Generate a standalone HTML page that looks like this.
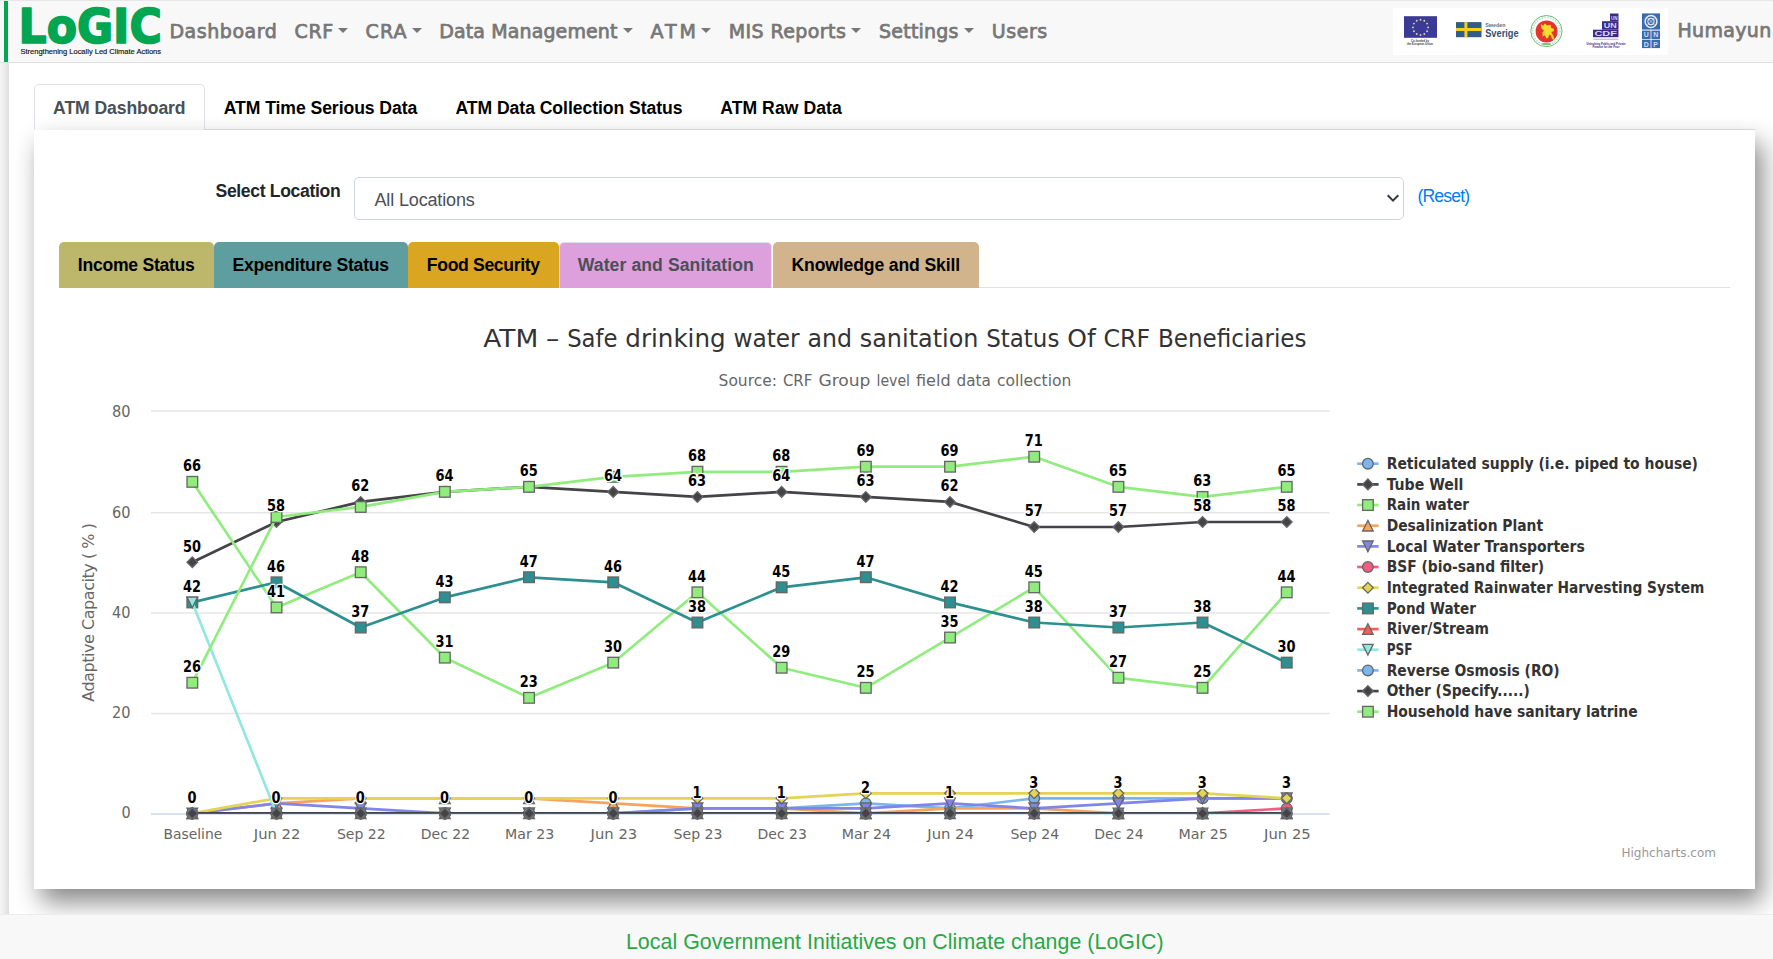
<!DOCTYPE html>
<html lang="en">
<head>
<meta charset="utf-8">
<title>LoGIC - ATM Dashboard</title>
<style>
*{box-sizing:border-box}
html,body{margin:0;padding:0}
body{width:1773px;height:959px;overflow:hidden;position:relative;background:#fff;font-family:'Liberation Sans', 'DejaVu Sans', sans-serif;color:#212529}
ul{list-style:none;margin:0;padding:0}
a{text-decoration:none;color:inherit}
.edge{position:absolute;left:0;top:63px;width:9px;height:852px;background:linear-gradient(90deg,#f5f5f5 0%,#ebebeb 50%,#dfdfdf 100%)}
.navbar{position:absolute;left:0;top:0;width:1773px;height:63px;background:#f8f8f8;border-top:1px solid #e7e7e7;border-bottom:1px solid #e0e0e0}
.navbar .bar{position:absolute;left:4px;top:0;width:4px;height:61px;background:#00a651}
.brand{position:absolute;left:0;top:0}
.navbar ul.menu li{position:absolute;top:18.2px;white-space:nowrap;font-family:'DejaVu Sans', 'Liberation Sans', sans-serif;font-weight:400;font-size:19px;line-height:24px;color:#777;-webkit-text-stroke:0.75px #777}
.dd:after{content:"";display:inline-block;margin-left:calc(5.2px - var(--ls, 0px));vertical-align:5.5px;border-top:5.2px solid #777;border-left:5px solid transparent;border-right:5px solid transparent;letter-spacing:0}
.logos{position:absolute;left:1393px;top:7px;width:275px;height:47px;background:#fff}
.user{position:absolute;left:1677.5px;top:17.2px;font-family:'DejaVu Sans', 'Liberation Sans', sans-serif;font-weight:400;font-size:19px;line-height:24px;color:#777;-webkit-text-stroke:0.75px #777;letter-spacing:0.32px;white-space:nowrap}
.tabs{position:absolute;left:34px;top:84.2px;width:1721px;height:46px;border-bottom:1.3px solid #dee2e6}
.tabs li{position:absolute;top:0;height:46px;text-align:center;font-weight:700;font-size:17.6px;line-height:49.2px;color:#000;white-space:nowrap}
.tabs li.act{line-height:47.5px;color:#495057;background:#fff;border:1.3px solid #dee2e6;border-bottom-color:#fff;border-radius:5px 5px 0 0}
.card{position:absolute;left:34px;top:129.7px;width:1721px;height:758.9px;background:#fff;box-shadow:6.67px 13.33px 24px #888}
.lbl{position:absolute;left:181.5px;top:50.6px;font-weight:700;font-size:17.6px;line-height:22px;color:#212529;letter-spacing:-0.35px;white-space:nowrap}
.sel{position:absolute;left:320px;top:47.1px;width:1050px;height:43px;border:1.3px solid #ced4da;border-radius:5px;background:#fff;color:#495057;font-size:17.6px;line-height:40px;padding:2.6px 0 0 19.5px;font-size:18px;letter-spacing:-0.15px}
.sel svg{position:absolute;right:3.3px;top:13.2px}
.reset{position:absolute;left:1383.5px;top:55px;color:#007bff;font-size:17.6px;line-height:22px;letter-spacing:-0.86px;white-space:nowrap}
.sub{position:absolute;left:25px;top:112px;width:1671px;height:46.5px;border-bottom:1.3px solid #dee2e6}
.sub li{position:absolute;top:0;height:46px;text-align:center;font-weight:700;font-size:17.6px;line-height:46px;color:#000;white-space:nowrap;border-radius:5px 5px 0 0}
.sub li.act{color:#495057;border:1.3px solid #dee2e6;border-bottom:0;line-height:44.6px}
svg.hc{position:absolute;left:25px;top:170.3px}
.footer{position:absolute;left:0;top:913.6px;width:1773px;height:46px;background:#f8f8f8;border-top:1px solid #ececec;text-align:center;color:#28a745;font-size:21.33px;line-height:26px;padding:14.4px 0 0 16.5px;letter-spacing:0.055px}
</style>
</head>
<body>
<div class="edge"></div>
<nav class="navbar">
  <div class="bar"></div>
  <a class="brand">
    <svg width="170" height="62" viewBox="0 0 170 62">
      <text x="18.6" y="41.9" font-family="'DejaVu Sans', 'Liberation Sans', sans-serif" font-weight="700" font-size="47.5" fill="#00a651" stroke="#00a651" stroke-width="1.7" stroke-linejoin="round" textLength="143.2" lengthAdjust="spacingAndGlyphs">LoGIC</text>
      <text x="20.5" y="52.9" font-family="'Liberation Sans', 'DejaVu Sans', sans-serif" font-size="7.6" fill="#111" stroke="#111" stroke-width="0.15" textLength="140.5" lengthAdjust="spacingAndGlyphs">Strengthening Locally Led Climate Actions</text>
    </svg>
  </a>
  <ul class="menu"><li style="left:169.4px;letter-spacing:0.55px;--ls:0.55px"><a>Dashboard</a></li><li style="left:294.6px;letter-spacing:0.55px;--ls:0.55px"><a class="dd">CRF</a></li><li style="left:365.6px;letter-spacing:1.05px;--ls:1.05px"><a class="dd">CRA</a></li><li style="left:439.2px;letter-spacing:0.12px;--ls:0.12px"><a class="dd">Data Management</a></li><li style="left:650.6px;letter-spacing:2.83px;--ls:2.83px"><a class="dd">ATM</a></li><li style="left:728.8px;letter-spacing:0.40px;--ls:0.40px"><a class="dd">MIS Reports</a></li><li style="left:879.1px;letter-spacing:0.21px;--ls:0.21px"><a class="dd">Settings</a></li><li style="left:991.8px;letter-spacing:0.54px;--ls:0.54px"><a>Users</a></li></ul>
  <div class="logos"><svg width="275" height="47" viewBox="0 0 275 47"><rect x="11.0" y="8.2" width="33" height="21.6" fill="#3b3b96"/><circle cx="27.50" cy="11.80" r="0.95" fill="#d9d6a6"/><circle cx="31.30" cy="12.82" r="0.95" fill="#d9d6a6"/><circle cx="34.08" cy="15.60" r="0.95" fill="#d9d6a6"/><circle cx="35.10" cy="19.40" r="0.95" fill="#d9d6a6"/><circle cx="34.08" cy="23.20" r="0.95" fill="#d9d6a6"/><circle cx="31.30" cy="25.98" r="0.95" fill="#d9d6a6"/><circle cx="27.50" cy="27.00" r="0.95" fill="#d9d6a6"/><circle cx="23.70" cy="25.98" r="0.95" fill="#d9d6a6"/><circle cx="20.92" cy="23.20" r="0.95" fill="#d9d6a6"/><circle cx="19.90" cy="19.40" r="0.95" fill="#d9d6a6"/><circle cx="20.92" cy="15.60" r="0.95" fill="#d9d6a6"/><circle cx="23.70" cy="12.82" r="0.95" fill="#d9d6a6"/><text x="27.0" y="33.5" text-anchor="middle" font-family="'Liberation Sans', 'DejaVu Sans', sans-serif" font-weight="700" font-size="3.2" fill="#444" textLength="18" lengthAdjust="spacingAndGlyphs">Co-funded by</text><text x="27.0" y="36.5" text-anchor="middle" font-family="'Liberation Sans', 'DejaVu Sans', sans-serif" font-weight="700" font-size="3.2" fill="#444" textLength="26" lengthAdjust="spacingAndGlyphs">the European Union</text><rect x="63.0" y="14.1" width="25.5" height="15.1" fill="#2f5d8c"/><rect x="71.4" y="14.1" width="3" height="15.1" fill="#f3cf24"/><rect x="63.0" y="20.0" width="25.5" height="3" fill="#f3cf24"/><text x="92.2" y="18.8" font-family="'Liberation Sans', 'DejaVu Sans', sans-serif" font-weight="700" font-size="6" fill="#5f7186" textLength="20.3" lengthAdjust="spacingAndGlyphs">Sweden</text><text x="92.2" y="29.0" font-family="'Liberation Sans', 'DejaVu Sans', sans-serif" font-weight="700" font-size="10.2" fill="#34506d" textLength="33.4" lengthAdjust="spacingAndGlyphs">Sverige</text><circle cx="153.4" cy="23.1" r="15.6" fill="#fff" stroke="#58b36a" stroke-width="0.9"/><circle cx="153.4" cy="23.1" r="13.6" fill="none" stroke="#bfe3c6" stroke-width="1.6" stroke-dasharray="1.6 1.2"/><circle cx="153.6" cy="23.4" r="11" fill="#e5352b"/><polygon points="147.8,16.1 150.4,17.8 151.7,15.5 154.3,17.4 157.5,16.8 158.2,20.0 160.8,20.7 160.8,23.3 158.2,23.9 160.1,27.2 161.4,31.8 159.1,31.1 157.8,27.5 156.2,26.5 155.2,29.8 153.3,30.4 152.0,27.2 149.7,28.5 149.4,24.6 151.0,22.6 148.4,20.4" fill="#f7dc2e"/><rect x="149.4" y="35.1" width="8" height="1.8" fill="#6fbf7c"/><rect x="217.0" y="5.5" width="8.5" height="7.7" fill="#3b2b86"/><rect x="209.0" y="13.2" width="16.5" height="8.5" fill="#3b2b86"/><rect x="200.0" y="21.7" width="25.5" height="7.5" fill="#3b2b86"/><text x="221.2" y="11.7" text-anchor="middle" font-family="'Liberation Sans', 'DejaVu Sans', sans-serif" font-weight="700" font-size="4.5" fill="#d9d4f0">UN</text><text x="217.2" y="20.0" text-anchor="middle" font-family="'Liberation Sans', 'DejaVu Sans', sans-serif" font-weight="700" font-size="7" fill="#d9d4f0" textLength="13" lengthAdjust="spacingAndGlyphs">UN</text><text x="212.7" y="27.9" text-anchor="middle" font-family="'Liberation Sans', 'DejaVu Sans', sans-serif" font-weight="700" font-size="6.4" fill="#d9d4f0" textLength="22.5" lengthAdjust="spacingAndGlyphs">CDF</text><rect x="200.5" y="30.8" width="25" height="0.7" fill="#8c82c0"/><text x="213.0" y="36.6" text-anchor="middle" font-family="'Liberation Sans', 'DejaVu Sans', sans-serif" font-weight="700" font-size="3" fill="#3b2b86" textLength="39" lengthAdjust="spacingAndGlyphs">Unlocking Public and Private</text><text x="213.0" y="39.8" text-anchor="middle" font-family="'Liberation Sans', 'DejaVu Sans', sans-serif" font-weight="700" font-size="3" fill="#3b2b86" textLength="27" lengthAdjust="spacingAndGlyphs">Finance for the Poor</text><rect x="249.0" y="5.4" width="18" height="16.2" fill="#3c6ab1"/><circle cx="258.0" cy="13.5" r="5.9" fill="none" stroke="#e8eef8" stroke-width="1.5"/><circle cx="258.0" cy="13.5" r="3.1" fill="none" stroke="#dfe7f5" stroke-width="1.1"/><path d="M254.4 17.1 L261.6 9.9 M254.4 9.9 L261.6 17.1" stroke="#dfe7f5" stroke-width="0.7"/><rect x="249.0" y="22.6" width="8.6" height="8.4" fill="#3c6ab1"/><text x="253.3" y="29.4" text-anchor="middle" font-family="'Liberation Sans', 'DejaVu Sans', sans-serif" font-weight="700" font-size="7" fill="#cfdcf1">U</text><rect x="258.4" y="22.6" width="8.6" height="8.4" fill="#3c6ab1"/><text x="262.7" y="29.4" text-anchor="middle" font-family="'Liberation Sans', 'DejaVu Sans', sans-serif" font-weight="700" font-size="7" fill="#cfdcf1">N</text><rect x="249.0" y="31.7" width="8.6" height="8.4" fill="#3c6ab1"/><text x="253.3" y="38.5" text-anchor="middle" font-family="'Liberation Sans', 'DejaVu Sans', sans-serif" font-weight="700" font-size="7" fill="#cfdcf1">D</text><rect x="258.4" y="31.7" width="8.6" height="8.4" fill="#3c6ab1"/><text x="262.7" y="38.5" text-anchor="middle" font-family="'Liberation Sans', 'DejaVu Sans', sans-serif" font-weight="700" font-size="7" fill="#cfdcf1">P</text></svg></div>
  <div class="user">Humayun</div>
</nav>
<ul class="tabs"><li class="act" style="left:-0.2px;width:171.0px;letter-spacing:-0.09px"><a>ATM Dashboard</a></li><li class="" style="left:170.5px;width:232.0px;letter-spacing:-0.07px"><a>ATM Time Serious Data</a></li><li class="" style="left:402.5px;width:265.0px;letter-spacing:-0.05px"><a>ATM Data Collection Status</a></li><li class="" style="left:667.5px;width:159.0px;letter-spacing:0.06px"><a>ATM Raw Data</a></li></ul>
<main class="card">
  <label class="lbl">Select Location</label>
  <div class="sel">All Locations<svg width="14" height="14" viewBox="0 0 14 14"><path d="M1.7 4.3 L7 9.6 L12.3 4.3" fill="none" stroke="#343a40" stroke-width="2"/></svg></div>
  <a class="reset">(Reset)</a>
  <ul class="sub"><li class="" style="left:-0.2px;width:154.8px;background:#bdb76b;letter-spacing:-0.27px"><a>Income Status</a></li><li class="" style="left:154.6px;width:194.2px;background:#5f9ea0;letter-spacing:-0.22px"><a>Expenditure Status</a></li><li class="" style="left:348.8px;width:151.0px;background:#daa520;letter-spacing:-0.34px"><a>Food Security</a></li><li class="act" style="left:500.3px;width:213.0px;background:#dda0dd;letter-spacing:0.09px"><a>Water and Sanitation</a></li><li class="" style="left:713.5px;width:206.5px;background:#d2b48c;letter-spacing:-0.14px"><a>Knowledge and Skill</a></li></ul>
  <svg class="hc" width="1670" height="580" viewBox="59 300 1670 580">
<text y="346.7" font-family="'DejaVu Sans', 'Liberation Sans', sans-serif" font-size="24" fill="#333"><tspan x="483.2" textLength="55.1" lengthAdjust="spacingAndGlyphs">ATM</tspan><tspan> </tspan><tspan x="546.1" textLength="13.3" lengthAdjust="spacingAndGlyphs">–</tspan><tspan> </tspan><tspan x="567.2" textLength="50.3" lengthAdjust="spacingAndGlyphs">Safe</tspan><tspan> </tspan><tspan x="625.3" textLength="100.3" lengthAdjust="spacingAndGlyphs">drinking</tspan><tspan> </tspan><tspan x="733.4" textLength="66.3" lengthAdjust="spacingAndGlyphs">water</tspan><tspan> </tspan><tspan x="807.5" textLength="44.5" lengthAdjust="spacingAndGlyphs">and</tspan><tspan> </tspan><tspan x="859.8" textLength="118.6" lengthAdjust="spacingAndGlyphs">sanitation</tspan><tspan> </tspan><tspan x="986.2" textLength="73.2" lengthAdjust="spacingAndGlyphs">Status</tspan><tspan> </tspan><tspan x="1067.2" textLength="28.5" lengthAdjust="spacingAndGlyphs">Of</tspan><tspan> </tspan><tspan x="1103.5" textLength="46.7" lengthAdjust="spacingAndGlyphs">CRF</tspan><tspan> </tspan><tspan x="1158.0" textLength="148.5" lengthAdjust="spacingAndGlyphs">Beneficiaries</tspan></text>
<text y="386.1" font-family="'DejaVu Sans', 'Liberation Sans', sans-serif" font-size="16" fill="#666"><tspan x="718.6" textLength="58.3" lengthAdjust="spacingAndGlyphs">Source:</tspan><tspan> </tspan><tspan x="782.9" textLength="29.5" lengthAdjust="spacingAndGlyphs">CRF</tspan><tspan> </tspan><tspan x="818.4" textLength="52.1" lengthAdjust="spacingAndGlyphs">Group</tspan><tspan> </tspan><tspan x="876.5" textLength="33.5" lengthAdjust="spacingAndGlyphs">level</tspan><tspan> </tspan><tspan x="916.0" textLength="34.6" lengthAdjust="spacingAndGlyphs">field</tspan><tspan> </tspan><tspan x="956.6" textLength="34.3" lengthAdjust="spacingAndGlyphs">data</tspan><tspan> </tspan><tspan x="996.9" textLength="74.4" lengthAdjust="spacingAndGlyphs">collection</tspan></text>
<line x1="151.0" x2="1329.5" y1="713.40" y2="713.40" stroke="#e6e6e6" stroke-width="1.5"/>
<line x1="151.0" x2="1329.5" y1="613.00" y2="613.00" stroke="#e6e6e6" stroke-width="1.5"/>
<line x1="151.0" x2="1329.5" y1="512.65" y2="512.65" stroke="#e6e6e6" stroke-width="1.5"/>
<line x1="151.0" x2="1329.5" y1="411.00" y2="411.00" stroke="#e6e6e6" stroke-width="1.5"/>
<line x1="151.0" x2="1329.5" y1="813.9" y2="813.9" stroke="#ccd6eb" stroke-width="1.5"/>
<text x="130.6" y="818.10" text-anchor="end" font-family="'DejaVu Sans', 'Liberation Sans', sans-serif" font-size="15" fill="#666" textLength="9.2" lengthAdjust="spacingAndGlyphs">0</text>
<text x="130.6" y="718.00" text-anchor="end" font-family="'DejaVu Sans', 'Liberation Sans', sans-serif" font-size="15" fill="#666" textLength="18.5" lengthAdjust="spacingAndGlyphs">20</text>
<text x="130.6" y="618.05" text-anchor="end" font-family="'DejaVu Sans', 'Liberation Sans', sans-serif" font-size="15" fill="#666" textLength="18.5" lengthAdjust="spacingAndGlyphs">40</text>
<text x="130.6" y="518.05" text-anchor="end" font-family="'DejaVu Sans', 'Liberation Sans', sans-serif" font-size="15" fill="#666" textLength="18.5" lengthAdjust="spacingAndGlyphs">60</text>
<text x="130.6" y="417.15" text-anchor="end" font-family="'DejaVu Sans', 'Liberation Sans', sans-serif" font-size="15" fill="#666" textLength="18.5" lengthAdjust="spacingAndGlyphs">80</text>
<text transform="translate(94.4,612.4) rotate(-90)" text-anchor="middle" font-family="'DejaVu Sans', 'Liberation Sans', sans-serif" font-size="16" fill="#666" textLength="178.8" lengthAdjust="spacing">Adaptive Capacity ( % )</text>
<text x="192.9" y="839" text-anchor="middle" font-family="'DejaVu Sans', 'Liberation Sans', sans-serif" font-size="14.67" fill="#666" textLength="58.7" lengthAdjust="spacingAndGlyphs">Baseline</text>
<text x="277.1" y="839" text-anchor="middle" font-family="'DejaVu Sans', 'Liberation Sans', sans-serif" font-size="14.67" fill="#666" textLength="46.6" lengthAdjust="spacingAndGlyphs">Jun 22</text>
<text x="361.3" y="839" text-anchor="middle" font-family="'DejaVu Sans', 'Liberation Sans', sans-serif" font-size="14.67" fill="#666" textLength="48.8" lengthAdjust="spacingAndGlyphs">Sep 22</text>
<text x="445.5" y="839" text-anchor="middle" font-family="'DejaVu Sans', 'Liberation Sans', sans-serif" font-size="14.67" fill="#666" textLength="49.3" lengthAdjust="spacingAndGlyphs">Dec 22</text>
<text x="529.7" y="839" text-anchor="middle" font-family="'DejaVu Sans', 'Liberation Sans', sans-serif" font-size="14.67" fill="#666" textLength="49.4" lengthAdjust="spacingAndGlyphs">Mar 23</text>
<text x="613.9" y="839" text-anchor="middle" font-family="'DejaVu Sans', 'Liberation Sans', sans-serif" font-size="14.67" fill="#666" textLength="46.6" lengthAdjust="spacingAndGlyphs">Jun 23</text>
<text x="698.0" y="839" text-anchor="middle" font-family="'DejaVu Sans', 'Liberation Sans', sans-serif" font-size="14.67" fill="#666" textLength="48.8" lengthAdjust="spacingAndGlyphs">Sep 23</text>
<text x="782.2" y="839" text-anchor="middle" font-family="'DejaVu Sans', 'Liberation Sans', sans-serif" font-size="14.67" fill="#666" textLength="49.3" lengthAdjust="spacingAndGlyphs">Dec 23</text>
<text x="866.4" y="839" text-anchor="middle" font-family="'DejaVu Sans', 'Liberation Sans', sans-serif" font-size="14.67" fill="#666" textLength="49.4" lengthAdjust="spacingAndGlyphs">Mar 24</text>
<text x="950.6" y="839" text-anchor="middle" font-family="'DejaVu Sans', 'Liberation Sans', sans-serif" font-size="14.67" fill="#666" textLength="46.6" lengthAdjust="spacingAndGlyphs">Jun 24</text>
<text x="1034.8" y="839" text-anchor="middle" font-family="'DejaVu Sans', 'Liberation Sans', sans-serif" font-size="14.67" fill="#666" textLength="48.8" lengthAdjust="spacingAndGlyphs">Sep 24</text>
<text x="1119.0" y="839" text-anchor="middle" font-family="'DejaVu Sans', 'Liberation Sans', sans-serif" font-size="14.67" fill="#666" textLength="49.3" lengthAdjust="spacingAndGlyphs">Dec 24</text>
<text x="1203.2" y="839" text-anchor="middle" font-family="'DejaVu Sans', 'Liberation Sans', sans-serif" font-size="14.67" fill="#666" textLength="49.4" lengthAdjust="spacingAndGlyphs">Mar 25</text>
<text x="1287.4" y="839" text-anchor="middle" font-family="'DejaVu Sans', 'Liberation Sans', sans-serif" font-size="14.67" fill="#666" textLength="46.6" lengthAdjust="spacingAndGlyphs">Jun 25</text>
<defs><clipPath id="plotclip"><rect x="150.0" y="405" width="1180.5" height="408.70000000000005"/></clipPath></defs>
<g><path d="M192.3 813.4 L276.5 813.4 L360.7 813.4 L444.9 813.4 L529.1 813.4 L613.2 813.4 L697.4 808.4 L781.6 808.4 L865.8 803.4 L950.0 808.4 L1034.2 798.3 L1118.4 798.3 L1202.6 798.3 L1286.8 798.3" fill="none" stroke="#7cb5ec" stroke-width="2.67" stroke-linejoin="round" stroke-linecap="round" clip-path="url(#plotclip)"/>
<circle cx="192.3" cy="813.4" r="5.33" fill="#7cb5ec" stroke="#666" stroke-width="1.33"/><circle cx="276.5" cy="813.4" r="5.33" fill="#7cb5ec" stroke="#666" stroke-width="1.33"/><circle cx="360.7" cy="813.4" r="5.33" fill="#7cb5ec" stroke="#666" stroke-width="1.33"/><circle cx="444.9" cy="813.4" r="5.33" fill="#7cb5ec" stroke="#666" stroke-width="1.33"/><circle cx="529.1" cy="813.4" r="5.33" fill="#7cb5ec" stroke="#666" stroke-width="1.33"/><circle cx="613.2" cy="813.4" r="5.33" fill="#7cb5ec" stroke="#666" stroke-width="1.33"/><circle cx="697.4" cy="808.4" r="5.33" fill="#7cb5ec" stroke="#666" stroke-width="1.33"/><circle cx="781.6" cy="808.4" r="5.33" fill="#7cb5ec" stroke="#666" stroke-width="1.33"/><circle cx="865.8" cy="803.4" r="5.33" fill="#7cb5ec" stroke="#666" stroke-width="1.33"/><circle cx="950.0" cy="808.4" r="5.33" fill="#7cb5ec" stroke="#666" stroke-width="1.33"/><circle cx="1034.2" cy="798.3" r="5.33" fill="#7cb5ec" stroke="#666" stroke-width="1.33"/><circle cx="1118.4" cy="798.3" r="5.33" fill="#7cb5ec" stroke="#666" stroke-width="1.33"/><circle cx="1202.6" cy="798.3" r="5.33" fill="#7cb5ec" stroke="#666" stroke-width="1.33"/><circle cx="1286.8" cy="798.3" r="5.33" fill="#7cb5ec" stroke="#666" stroke-width="1.33"/></g>
<g><path d="M192.3 562.2 L276.5 522.0 L360.7 501.9 L444.9 491.9 L529.1 486.8 L613.2 491.9 L697.4 496.9 L781.6 491.9 L865.8 496.9 L950.0 501.9 L1034.2 527.0 L1118.4 527.0 L1202.6 522.0 L1286.8 522.0" fill="none" stroke="#434348" stroke-width="2.67" stroke-linejoin="round" stroke-linecap="round" clip-path="url(#plotclip)"/>
<polygon points="192.3,556.9 197.6,562.2 192.3,567.5 187.0,562.2" fill="#434348" stroke="#666" stroke-width="1.33"/><polygon points="276.5,516.7 281.8,522.0 276.5,527.3 271.2,522.0" fill="#434348" stroke="#666" stroke-width="1.33"/><polygon points="360.7,496.6 366.0,501.9 360.7,507.2 355.4,501.9" fill="#434348" stroke="#666" stroke-width="1.33"/><polygon points="444.9,486.5 450.2,491.9 444.9,497.2 439.5,491.9" fill="#434348" stroke="#666" stroke-width="1.33"/><polygon points="529.1,481.5 534.4,486.8 529.1,492.2 523.7,486.8" fill="#434348" stroke="#666" stroke-width="1.33"/><polygon points="613.2,486.5 618.6,491.9 613.2,497.2 607.9,491.9" fill="#434348" stroke="#666" stroke-width="1.33"/><polygon points="697.4,491.6 702.8,496.9 697.4,502.2 692.1,496.9" fill="#434348" stroke="#666" stroke-width="1.33"/><polygon points="781.6,486.5 787.0,491.9 781.6,497.2 776.3,491.9" fill="#434348" stroke="#666" stroke-width="1.33"/><polygon points="865.8,491.6 871.1,496.9 865.8,502.2 860.5,496.9" fill="#434348" stroke="#666" stroke-width="1.33"/><polygon points="950.0,496.6 955.3,501.9 950.0,507.2 944.7,501.9" fill="#434348" stroke="#666" stroke-width="1.33"/><polygon points="1034.2,521.7 1039.5,527.0 1034.2,532.4 1028.9,527.0" fill="#434348" stroke="#666" stroke-width="1.33"/><polygon points="1118.4,521.7 1123.7,527.0 1118.4,532.4 1113.1,527.0" fill="#434348" stroke="#666" stroke-width="1.33"/><polygon points="1202.6,516.7 1207.9,522.0 1202.6,527.3 1197.2,522.0" fill="#434348" stroke="#666" stroke-width="1.33"/><polygon points="1286.8,516.7 1292.1,522.0 1286.8,527.3 1281.4,522.0" fill="#434348" stroke="#666" stroke-width="1.33"/></g>
<g><path d="M192.3 481.8 L276.5 607.4 L360.7 572.2 L444.9 657.7 L529.1 697.8 L613.2 662.7 L697.4 592.3 L781.6 667.7 L865.8 687.8 L950.0 637.6 L1034.2 587.3 L1118.4 677.8 L1202.6 687.8 L1286.8 592.3" fill="none" stroke="#90ed7d" stroke-width="2.67" stroke-linejoin="round" stroke-linecap="round" clip-path="url(#plotclip)"/>
<rect x="187.0" y="476.5" width="10.66" height="10.66" fill="#90ed7d" stroke="#666" stroke-width="1.33"/><rect x="271.2" y="602.1" width="10.66" height="10.66" fill="#90ed7d" stroke="#666" stroke-width="1.33"/><rect x="355.4" y="566.9" width="10.66" height="10.66" fill="#90ed7d" stroke="#666" stroke-width="1.33"/><rect x="439.5" y="652.3" width="10.66" height="10.66" fill="#90ed7d" stroke="#666" stroke-width="1.33"/><rect x="523.7" y="692.5" width="10.66" height="10.66" fill="#90ed7d" stroke="#666" stroke-width="1.33"/><rect x="607.9" y="657.3" width="10.66" height="10.66" fill="#90ed7d" stroke="#666" stroke-width="1.33"/><rect x="692.1" y="587.0" width="10.66" height="10.66" fill="#90ed7d" stroke="#666" stroke-width="1.33"/><rect x="776.3" y="662.4" width="10.66" height="10.66" fill="#90ed7d" stroke="#666" stroke-width="1.33"/><rect x="860.5" y="682.5" width="10.66" height="10.66" fill="#90ed7d" stroke="#666" stroke-width="1.33"/><rect x="944.7" y="632.2" width="10.66" height="10.66" fill="#90ed7d" stroke="#666" stroke-width="1.33"/><rect x="1028.9" y="582.0" width="10.66" height="10.66" fill="#90ed7d" stroke="#666" stroke-width="1.33"/><rect x="1113.1" y="672.4" width="10.66" height="10.66" fill="#90ed7d" stroke="#666" stroke-width="1.33"/><rect x="1197.2" y="682.5" width="10.66" height="10.66" fill="#90ed7d" stroke="#666" stroke-width="1.33"/><rect x="1281.4" y="587.0" width="10.66" height="10.66" fill="#90ed7d" stroke="#666" stroke-width="1.33"/></g>
<g><path d="M192.3 813.4 L276.5 803.4 L360.7 798.3 L444.9 798.3 L529.1 798.3 L613.2 803.4 L697.4 808.4 L781.6 808.4 L865.8 813.4 L950.0 808.4 L1034.2 808.4 L1118.4 813.4 L1202.6 813.4 L1286.8 813.4" fill="none" stroke="#f7a35c" stroke-width="2.67" stroke-linejoin="round" stroke-linecap="round" clip-path="url(#plotclip)"/>
<polygon points="192.3,808.1 197.6,818.7 187.0,818.7" fill="#f7a35c" stroke="#666" stroke-width="1.33"/><polygon points="276.5,798.0 281.8,808.7 271.2,808.7" fill="#f7a35c" stroke="#666" stroke-width="1.33"/><polygon points="360.7,793.0 366.0,803.7 355.4,803.7" fill="#f7a35c" stroke="#666" stroke-width="1.33"/><polygon points="444.9,793.0 450.2,803.7 439.5,803.7" fill="#f7a35c" stroke="#666" stroke-width="1.33"/><polygon points="529.1,793.0 534.4,803.7 523.7,803.7" fill="#f7a35c" stroke="#666" stroke-width="1.33"/><polygon points="613.2,798.0 618.6,808.7 607.9,808.7" fill="#f7a35c" stroke="#666" stroke-width="1.33"/><polygon points="697.4,803.0 702.8,813.7 692.1,813.7" fill="#f7a35c" stroke="#666" stroke-width="1.33"/><polygon points="781.6,803.0 787.0,813.7 776.3,813.7" fill="#f7a35c" stroke="#666" stroke-width="1.33"/><polygon points="865.8,808.1 871.1,818.7 860.5,818.7" fill="#f7a35c" stroke="#666" stroke-width="1.33"/><polygon points="950.0,803.0 955.3,813.7 944.7,813.7" fill="#f7a35c" stroke="#666" stroke-width="1.33"/><polygon points="1034.2,803.0 1039.5,813.7 1028.9,813.7" fill="#f7a35c" stroke="#666" stroke-width="1.33"/><polygon points="1118.4,808.1 1123.7,818.7 1113.1,818.7" fill="#f7a35c" stroke="#666" stroke-width="1.33"/><polygon points="1202.6,808.1 1207.9,818.7 1197.2,818.7" fill="#f7a35c" stroke="#666" stroke-width="1.33"/><polygon points="1286.8,808.1 1292.1,818.7 1281.4,818.7" fill="#f7a35c" stroke="#666" stroke-width="1.33"/></g>
<g><path d="M192.3 813.4 L276.5 803.4 L360.7 808.4 L444.9 813.4 L529.1 813.4 L613.2 813.4 L697.4 808.4 L781.6 808.4 L865.8 808.4 L950.0 803.4 L1034.2 808.4 L1118.4 803.4 L1202.6 798.3 L1286.8 798.3" fill="none" stroke="#8085e9" stroke-width="2.67" stroke-linejoin="round" stroke-linecap="round" clip-path="url(#plotclip)"/>
<polygon points="187.0,808.1 197.6,808.1 192.3,818.7" fill="#8085e9" stroke="#666" stroke-width="1.33"/><polygon points="271.2,798.0 281.8,798.0 276.5,808.7" fill="#8085e9" stroke="#666" stroke-width="1.33"/><polygon points="355.4,803.0 366.0,803.0 360.7,813.7" fill="#8085e9" stroke="#666" stroke-width="1.33"/><polygon points="439.5,808.1 450.2,808.1 444.9,818.7" fill="#8085e9" stroke="#666" stroke-width="1.33"/><polygon points="523.7,808.1 534.4,808.1 529.1,818.7" fill="#8085e9" stroke="#666" stroke-width="1.33"/><polygon points="607.9,808.1 618.6,808.1 613.2,818.7" fill="#8085e9" stroke="#666" stroke-width="1.33"/><polygon points="692.1,803.0 702.8,803.0 697.4,813.7" fill="#8085e9" stroke="#666" stroke-width="1.33"/><polygon points="776.3,803.0 787.0,803.0 781.6,813.7" fill="#8085e9" stroke="#666" stroke-width="1.33"/><polygon points="860.5,803.0 871.1,803.0 865.8,813.7" fill="#8085e9" stroke="#666" stroke-width="1.33"/><polygon points="944.7,798.0 955.3,798.0 950.0,808.7" fill="#8085e9" stroke="#666" stroke-width="1.33"/><polygon points="1028.9,803.0 1039.5,803.0 1034.2,813.7" fill="#8085e9" stroke="#666" stroke-width="1.33"/><polygon points="1113.1,798.0 1123.7,798.0 1118.4,808.7" fill="#8085e9" stroke="#666" stroke-width="1.33"/><polygon points="1197.2,793.0 1207.9,793.0 1202.6,803.7" fill="#8085e9" stroke="#666" stroke-width="1.33"/><polygon points="1281.4,793.0 1292.1,793.0 1286.8,803.7" fill="#8085e9" stroke="#666" stroke-width="1.33"/></g>
<g><path d="M192.3 813.4 L276.5 813.4 L360.7 813.4 L444.9 813.4 L529.1 813.4 L613.2 813.4 L697.4 813.4 L781.6 813.4 L865.8 813.4 L950.0 813.4 L1034.2 813.4 L1118.4 813.4 L1202.6 813.4 L1286.8 808.4" fill="none" stroke="#f15c80" stroke-width="2.67" stroke-linejoin="round" stroke-linecap="round" clip-path="url(#plotclip)"/>
<circle cx="192.3" cy="813.4" r="5.33" fill="#f15c80" stroke="#666" stroke-width="1.33"/><circle cx="276.5" cy="813.4" r="5.33" fill="#f15c80" stroke="#666" stroke-width="1.33"/><circle cx="360.7" cy="813.4" r="5.33" fill="#f15c80" stroke="#666" stroke-width="1.33"/><circle cx="444.9" cy="813.4" r="5.33" fill="#f15c80" stroke="#666" stroke-width="1.33"/><circle cx="529.1" cy="813.4" r="5.33" fill="#f15c80" stroke="#666" stroke-width="1.33"/><circle cx="613.2" cy="813.4" r="5.33" fill="#f15c80" stroke="#666" stroke-width="1.33"/><circle cx="697.4" cy="813.4" r="5.33" fill="#f15c80" stroke="#666" stroke-width="1.33"/><circle cx="781.6" cy="813.4" r="5.33" fill="#f15c80" stroke="#666" stroke-width="1.33"/><circle cx="865.8" cy="813.4" r="5.33" fill="#f15c80" stroke="#666" stroke-width="1.33"/><circle cx="950.0" cy="813.4" r="5.33" fill="#f15c80" stroke="#666" stroke-width="1.33"/><circle cx="1034.2" cy="813.4" r="5.33" fill="#f15c80" stroke="#666" stroke-width="1.33"/><circle cx="1118.4" cy="813.4" r="5.33" fill="#f15c80" stroke="#666" stroke-width="1.33"/><circle cx="1202.6" cy="813.4" r="5.33" fill="#f15c80" stroke="#666" stroke-width="1.33"/><circle cx="1286.8" cy="808.4" r="5.33" fill="#f15c80" stroke="#666" stroke-width="1.33"/></g>
<g><path d="M192.3 813.4 L276.5 798.3 L360.7 798.3 L444.9 798.3 L529.1 798.3 L613.2 798.3 L697.4 798.3 L781.6 798.3 L865.8 793.3 L950.0 793.3 L1034.2 793.3 L1118.4 793.3 L1202.6 793.3 L1286.8 798.3" fill="none" stroke="#e4d354" stroke-width="2.67" stroke-linejoin="round" stroke-linecap="round" clip-path="url(#plotclip)"/>
<polygon points="192.3,808.1 197.6,813.4 192.3,818.7 187.0,813.4" fill="#e4d354" stroke="#666" stroke-width="1.33"/><polygon points="276.5,793.0 281.8,798.3 276.5,803.7 271.2,798.3" fill="#e4d354" stroke="#666" stroke-width="1.33"/><polygon points="360.7,793.0 366.0,798.3 360.7,803.7 355.4,798.3" fill="#e4d354" stroke="#666" stroke-width="1.33"/><polygon points="444.9,793.0 450.2,798.3 444.9,803.7 439.5,798.3" fill="#e4d354" stroke="#666" stroke-width="1.33"/><polygon points="529.1,793.0 534.4,798.3 529.1,803.7 523.7,798.3" fill="#e4d354" stroke="#666" stroke-width="1.33"/><polygon points="613.2,793.0 618.6,798.3 613.2,803.7 607.9,798.3" fill="#e4d354" stroke="#666" stroke-width="1.33"/><polygon points="697.4,793.0 702.8,798.3 697.4,803.7 692.1,798.3" fill="#e4d354" stroke="#666" stroke-width="1.33"/><polygon points="781.6,793.0 787.0,798.3 781.6,803.7 776.3,798.3" fill="#e4d354" stroke="#666" stroke-width="1.33"/><polygon points="865.8,788.0 871.1,793.3 865.8,798.6 860.5,793.3" fill="#e4d354" stroke="#666" stroke-width="1.33"/><polygon points="950.0,788.0 955.3,793.3 950.0,798.6 944.7,793.3" fill="#e4d354" stroke="#666" stroke-width="1.33"/><polygon points="1034.2,788.0 1039.5,793.3 1034.2,798.6 1028.9,793.3" fill="#e4d354" stroke="#666" stroke-width="1.33"/><polygon points="1118.4,788.0 1123.7,793.3 1118.4,798.6 1113.1,793.3" fill="#e4d354" stroke="#666" stroke-width="1.33"/><polygon points="1202.6,788.0 1207.9,793.3 1202.6,798.6 1197.2,793.3" fill="#e4d354" stroke="#666" stroke-width="1.33"/><polygon points="1286.8,793.0 1292.1,798.3 1286.8,803.7 1281.4,798.3" fill="#e4d354" stroke="#666" stroke-width="1.33"/></g>
<g><path d="M192.3 602.4 L276.5 582.3 L360.7 627.5 L444.9 597.4 L529.1 577.3 L613.2 582.3 L697.4 622.5 L781.6 587.3 L865.8 577.3 L950.0 602.4 L1034.2 622.5 L1118.4 627.5 L1202.6 622.5 L1286.8 662.7" fill="none" stroke="#2b908f" stroke-width="2.67" stroke-linejoin="round" stroke-linecap="round" clip-path="url(#plotclip)"/>
<rect x="187.0" y="597.1" width="10.66" height="10.66" fill="#2b908f" stroke="#666" stroke-width="1.33"/><rect x="271.2" y="577.0" width="10.66" height="10.66" fill="#2b908f" stroke="#666" stroke-width="1.33"/><rect x="355.4" y="622.2" width="10.66" height="10.66" fill="#2b908f" stroke="#666" stroke-width="1.33"/><rect x="439.5" y="592.0" width="10.66" height="10.66" fill="#2b908f" stroke="#666" stroke-width="1.33"/><rect x="523.7" y="571.9" width="10.66" height="10.66" fill="#2b908f" stroke="#666" stroke-width="1.33"/><rect x="607.9" y="577.0" width="10.66" height="10.66" fill="#2b908f" stroke="#666" stroke-width="1.33"/><rect x="692.1" y="617.2" width="10.66" height="10.66" fill="#2b908f" stroke="#666" stroke-width="1.33"/><rect x="776.3" y="582.0" width="10.66" height="10.66" fill="#2b908f" stroke="#666" stroke-width="1.33"/><rect x="860.5" y="571.9" width="10.66" height="10.66" fill="#2b908f" stroke="#666" stroke-width="1.33"/><rect x="944.7" y="597.1" width="10.66" height="10.66" fill="#2b908f" stroke="#666" stroke-width="1.33"/><rect x="1028.9" y="617.2" width="10.66" height="10.66" fill="#2b908f" stroke="#666" stroke-width="1.33"/><rect x="1113.1" y="622.2" width="10.66" height="10.66" fill="#2b908f" stroke="#666" stroke-width="1.33"/><rect x="1197.2" y="617.2" width="10.66" height="10.66" fill="#2b908f" stroke="#666" stroke-width="1.33"/><rect x="1281.4" y="657.3" width="10.66" height="10.66" fill="#2b908f" stroke="#666" stroke-width="1.33"/></g>
<g><path d="M192.3 813.4 L276.5 813.4 L360.7 813.4 L444.9 813.4 L529.1 813.4 L613.2 813.4 L697.4 813.4 L781.6 813.4 L865.8 813.4 L950.0 813.4 L1034.2 813.4 L1118.4 813.4 L1202.6 813.4 L1286.8 813.4" fill="none" stroke="#f45b5b" stroke-width="2.67" stroke-linejoin="round" stroke-linecap="round" clip-path="url(#plotclip)"/>
<polygon points="192.3,808.1 197.6,818.7 187.0,818.7" fill="#f45b5b" stroke="#666" stroke-width="1.33"/><polygon points="276.5,808.1 281.8,818.7 271.2,818.7" fill="#f45b5b" stroke="#666" stroke-width="1.33"/><polygon points="360.7,808.1 366.0,818.7 355.4,818.7" fill="#f45b5b" stroke="#666" stroke-width="1.33"/><polygon points="444.9,808.1 450.2,818.7 439.5,818.7" fill="#f45b5b" stroke="#666" stroke-width="1.33"/><polygon points="529.1,808.1 534.4,818.7 523.7,818.7" fill="#f45b5b" stroke="#666" stroke-width="1.33"/><polygon points="613.2,808.1 618.6,818.7 607.9,818.7" fill="#f45b5b" stroke="#666" stroke-width="1.33"/><polygon points="697.4,808.1 702.8,818.7 692.1,818.7" fill="#f45b5b" stroke="#666" stroke-width="1.33"/><polygon points="781.6,808.1 787.0,818.7 776.3,818.7" fill="#f45b5b" stroke="#666" stroke-width="1.33"/><polygon points="865.8,808.1 871.1,818.7 860.5,818.7" fill="#f45b5b" stroke="#666" stroke-width="1.33"/><polygon points="950.0,808.1 955.3,818.7 944.7,818.7" fill="#f45b5b" stroke="#666" stroke-width="1.33"/><polygon points="1034.2,808.1 1039.5,818.7 1028.9,818.7" fill="#f45b5b" stroke="#666" stroke-width="1.33"/><polygon points="1118.4,808.1 1123.7,818.7 1113.1,818.7" fill="#f45b5b" stroke="#666" stroke-width="1.33"/><polygon points="1202.6,808.1 1207.9,818.7 1197.2,818.7" fill="#f45b5b" stroke="#666" stroke-width="1.33"/><polygon points="1286.8,808.1 1292.1,818.7 1281.4,818.7" fill="#f45b5b" stroke="#666" stroke-width="1.33"/></g>
<g><path d="M192.3 602.4 L276.5 813.4 L360.7 813.4 L444.9 813.4 L529.1 813.4 L613.2 813.4 L697.4 813.4 L781.6 813.4 L865.8 813.4 L950.0 813.4 L1034.2 813.4 L1118.4 813.4 L1202.6 813.4 L1286.8 813.4" fill="none" stroke="#91e8e1" stroke-width="2.67" stroke-linejoin="round" stroke-linecap="round" clip-path="url(#plotclip)"/>
<polygon points="187.0,597.1 197.6,597.1 192.3,607.7" fill="#91e8e1" stroke="#666" stroke-width="1.33"/><polygon points="271.2,808.1 281.8,808.1 276.5,818.7" fill="#91e8e1" stroke="#666" stroke-width="1.33"/><polygon points="355.4,808.1 366.0,808.1 360.7,818.7" fill="#91e8e1" stroke="#666" stroke-width="1.33"/><polygon points="439.5,808.1 450.2,808.1 444.9,818.7" fill="#91e8e1" stroke="#666" stroke-width="1.33"/><polygon points="523.7,808.1 534.4,808.1 529.1,818.7" fill="#91e8e1" stroke="#666" stroke-width="1.33"/><polygon points="607.9,808.1 618.6,808.1 613.2,818.7" fill="#91e8e1" stroke="#666" stroke-width="1.33"/><polygon points="692.1,808.1 702.8,808.1 697.4,818.7" fill="#91e8e1" stroke="#666" stroke-width="1.33"/><polygon points="776.3,808.1 787.0,808.1 781.6,818.7" fill="#91e8e1" stroke="#666" stroke-width="1.33"/><polygon points="860.5,808.1 871.1,808.1 865.8,818.7" fill="#91e8e1" stroke="#666" stroke-width="1.33"/><polygon points="944.7,808.1 955.3,808.1 950.0,818.7" fill="#91e8e1" stroke="#666" stroke-width="1.33"/><polygon points="1028.9,808.1 1039.5,808.1 1034.2,818.7" fill="#91e8e1" stroke="#666" stroke-width="1.33"/><polygon points="1113.1,808.1 1123.7,808.1 1118.4,818.7" fill="#91e8e1" stroke="#666" stroke-width="1.33"/><polygon points="1197.2,808.1 1207.9,808.1 1202.6,818.7" fill="#91e8e1" stroke="#666" stroke-width="1.33"/><polygon points="1281.4,808.1 1292.1,808.1 1286.8,818.7" fill="#91e8e1" stroke="#666" stroke-width="1.33"/></g>
<g><path d="M192.3 813.4 L276.5 813.4 L360.7 813.4 L444.9 813.4 L529.1 813.4 L613.2 813.4 L697.4 813.4 L781.6 813.4 L865.8 813.4 L950.0 813.4 L1034.2 813.4 L1118.4 813.4 L1202.6 813.4 L1286.8 813.4" fill="none" stroke="#7cb5ec" stroke-width="2.67" stroke-linejoin="round" stroke-linecap="round" clip-path="url(#plotclip)"/>
<circle cx="192.3" cy="813.4" r="5.33" fill="#7cb5ec" stroke="#666" stroke-width="1.33"/><circle cx="276.5" cy="813.4" r="5.33" fill="#7cb5ec" stroke="#666" stroke-width="1.33"/><circle cx="360.7" cy="813.4" r="5.33" fill="#7cb5ec" stroke="#666" stroke-width="1.33"/><circle cx="444.9" cy="813.4" r="5.33" fill="#7cb5ec" stroke="#666" stroke-width="1.33"/><circle cx="529.1" cy="813.4" r="5.33" fill="#7cb5ec" stroke="#666" stroke-width="1.33"/><circle cx="613.2" cy="813.4" r="5.33" fill="#7cb5ec" stroke="#666" stroke-width="1.33"/><circle cx="697.4" cy="813.4" r="5.33" fill="#7cb5ec" stroke="#666" stroke-width="1.33"/><circle cx="781.6" cy="813.4" r="5.33" fill="#7cb5ec" stroke="#666" stroke-width="1.33"/><circle cx="865.8" cy="813.4" r="5.33" fill="#7cb5ec" stroke="#666" stroke-width="1.33"/><circle cx="950.0" cy="813.4" r="5.33" fill="#7cb5ec" stroke="#666" stroke-width="1.33"/><circle cx="1034.2" cy="813.4" r="5.33" fill="#7cb5ec" stroke="#666" stroke-width="1.33"/><circle cx="1118.4" cy="813.4" r="5.33" fill="#7cb5ec" stroke="#666" stroke-width="1.33"/><circle cx="1202.6" cy="813.4" r="5.33" fill="#7cb5ec" stroke="#666" stroke-width="1.33"/><circle cx="1286.8" cy="813.4" r="5.33" fill="#7cb5ec" stroke="#666" stroke-width="1.33"/></g>
<g><path d="M192.3 813.4 L276.5 813.4 L360.7 813.4 L444.9 813.4 L529.1 813.4 L613.2 813.4 L697.4 813.4 L781.6 813.4 L865.8 813.4 L950.0 813.4 L1034.2 813.4 L1118.4 813.4 L1202.6 813.4 L1286.8 813.4" fill="none" stroke="#434348" stroke-width="2.67" stroke-linejoin="round" stroke-linecap="round" clip-path="url(#plotclip)"/>
<polygon points="192.3,808.1 197.6,813.4 192.3,818.7 187.0,813.4" fill="#434348" stroke="#666" stroke-width="1.33"/><polygon points="276.5,808.1 281.8,813.4 276.5,818.7 271.2,813.4" fill="#434348" stroke="#666" stroke-width="1.33"/><polygon points="360.7,808.1 366.0,813.4 360.7,818.7 355.4,813.4" fill="#434348" stroke="#666" stroke-width="1.33"/><polygon points="444.9,808.1 450.2,813.4 444.9,818.7 439.5,813.4" fill="#434348" stroke="#666" stroke-width="1.33"/><polygon points="529.1,808.1 534.4,813.4 529.1,818.7 523.7,813.4" fill="#434348" stroke="#666" stroke-width="1.33"/><polygon points="613.2,808.1 618.6,813.4 613.2,818.7 607.9,813.4" fill="#434348" stroke="#666" stroke-width="1.33"/><polygon points="697.4,808.1 702.8,813.4 697.4,818.7 692.1,813.4" fill="#434348" stroke="#666" stroke-width="1.33"/><polygon points="781.6,808.1 787.0,813.4 781.6,818.7 776.3,813.4" fill="#434348" stroke="#666" stroke-width="1.33"/><polygon points="865.8,808.1 871.1,813.4 865.8,818.7 860.5,813.4" fill="#434348" stroke="#666" stroke-width="1.33"/><polygon points="950.0,808.1 955.3,813.4 950.0,818.7 944.7,813.4" fill="#434348" stroke="#666" stroke-width="1.33"/><polygon points="1034.2,808.1 1039.5,813.4 1034.2,818.7 1028.9,813.4" fill="#434348" stroke="#666" stroke-width="1.33"/><polygon points="1118.4,808.1 1123.7,813.4 1118.4,818.7 1113.1,813.4" fill="#434348" stroke="#666" stroke-width="1.33"/><polygon points="1202.6,808.1 1207.9,813.4 1202.6,818.7 1197.2,813.4" fill="#434348" stroke="#666" stroke-width="1.33"/><polygon points="1286.8,808.1 1292.1,813.4 1286.8,818.7 1281.4,813.4" fill="#434348" stroke="#666" stroke-width="1.33"/></g>
<g><path d="M192.3 682.8 L276.5 517.0 L360.7 506.9 L444.9 491.9 L529.1 486.8 L613.2 476.8 L697.4 471.8 L781.6 471.8 L865.8 466.7 L950.0 466.7 L1034.2 456.7 L1118.4 486.8 L1202.6 496.9 L1286.8 486.8" fill="none" stroke="#90ed7d" stroke-width="2.67" stroke-linejoin="round" stroke-linecap="round" clip-path="url(#plotclip)"/>
<rect x="187.0" y="677.4" width="10.66" height="10.66" fill="#90ed7d" stroke="#666" stroke-width="1.33"/><rect x="271.2" y="511.7" width="10.66" height="10.66" fill="#90ed7d" stroke="#666" stroke-width="1.33"/><rect x="355.4" y="501.6" width="10.66" height="10.66" fill="#90ed7d" stroke="#666" stroke-width="1.33"/><rect x="439.5" y="486.5" width="10.66" height="10.66" fill="#90ed7d" stroke="#666" stroke-width="1.33"/><rect x="523.7" y="481.5" width="10.66" height="10.66" fill="#90ed7d" stroke="#666" stroke-width="1.33"/><rect x="607.9" y="471.5" width="10.66" height="10.66" fill="#90ed7d" stroke="#666" stroke-width="1.33"/><rect x="692.1" y="466.4" width="10.66" height="10.66" fill="#90ed7d" stroke="#666" stroke-width="1.33"/><rect x="776.3" y="466.4" width="10.66" height="10.66" fill="#90ed7d" stroke="#666" stroke-width="1.33"/><rect x="860.5" y="461.4" width="10.66" height="10.66" fill="#90ed7d" stroke="#666" stroke-width="1.33"/><rect x="944.7" y="461.4" width="10.66" height="10.66" fill="#90ed7d" stroke="#666" stroke-width="1.33"/><rect x="1028.9" y="451.4" width="10.66" height="10.66" fill="#90ed7d" stroke="#666" stroke-width="1.33"/><rect x="1113.1" y="481.5" width="10.66" height="10.66" fill="#90ed7d" stroke="#666" stroke-width="1.33"/><rect x="1197.2" y="491.6" width="10.66" height="10.66" fill="#90ed7d" stroke="#666" stroke-width="1.33"/><rect x="1281.4" y="481.5" width="10.66" height="10.66" fill="#90ed7d" stroke="#666" stroke-width="1.33"/></g>
<g font-family="'DejaVu Sans Condensed', 'DejaVu Sans', 'Liberation Sans', sans-serif" font-weight="700" font-size="15.2" text-anchor="middle" fill="#000" stroke="#fff" stroke-width="2.6" stroke-linejoin="round" paint-order="stroke">
<text x="191.9" y="471.2" textLength="18.0" lengthAdjust="spacingAndGlyphs">66</text>
<text x="276.1" y="596.8" textLength="18.0" lengthAdjust="spacingAndGlyphs">41</text>
<text x="360.3" y="561.6" textLength="18.0" lengthAdjust="spacingAndGlyphs">48</text>
<text x="444.5" y="647.1" textLength="18.0" lengthAdjust="spacingAndGlyphs">31</text>
<text x="528.7" y="687.2" textLength="18.0" lengthAdjust="spacingAndGlyphs">23</text>
<text x="612.9" y="652.1" textLength="18.0" lengthAdjust="spacingAndGlyphs">30</text>
<text x="697.0" y="581.7" textLength="18.0" lengthAdjust="spacingAndGlyphs">44</text>
<text x="781.2" y="657.1" textLength="18.0" lengthAdjust="spacingAndGlyphs">29</text>
<text x="865.4" y="677.2" textLength="18.0" lengthAdjust="spacingAndGlyphs">25</text>
<text x="949.6" y="627.0" textLength="18.0" lengthAdjust="spacingAndGlyphs">35</text>
<text x="1033.8" y="576.7" textLength="18.0" lengthAdjust="spacingAndGlyphs">45</text>
<text x="1118.0" y="667.2" textLength="18.0" lengthAdjust="spacingAndGlyphs">27</text>
<text x="1202.2" y="677.2" textLength="18.0" lengthAdjust="spacingAndGlyphs">25</text>
<text x="1286.4" y="581.7" textLength="18.0" lengthAdjust="spacingAndGlyphs">44</text>
<text x="191.9" y="591.8" textLength="18.0" lengthAdjust="spacingAndGlyphs">42</text>
<text x="276.1" y="571.7" textLength="18.0" lengthAdjust="spacingAndGlyphs">46</text>
<text x="360.3" y="616.9" textLength="18.0" lengthAdjust="spacingAndGlyphs">37</text>
<text x="444.5" y="586.8" textLength="18.0" lengthAdjust="spacingAndGlyphs">43</text>
<text x="528.7" y="566.7" textLength="18.0" lengthAdjust="spacingAndGlyphs">47</text>
<text x="612.9" y="571.7" textLength="18.0" lengthAdjust="spacingAndGlyphs">46</text>
<text x="697.0" y="611.9" textLength="18.0" lengthAdjust="spacingAndGlyphs">38</text>
<text x="781.2" y="576.7" textLength="18.0" lengthAdjust="spacingAndGlyphs">45</text>
<text x="865.4" y="566.7" textLength="18.0" lengthAdjust="spacingAndGlyphs">47</text>
<text x="949.6" y="591.8" textLength="18.0" lengthAdjust="spacingAndGlyphs">42</text>
<text x="1033.8" y="611.9" textLength="18.0" lengthAdjust="spacingAndGlyphs">38</text>
<text x="1118.0" y="616.9" textLength="18.0" lengthAdjust="spacingAndGlyphs">37</text>
<text x="1202.2" y="611.9" textLength="18.0" lengthAdjust="spacingAndGlyphs">38</text>
<text x="1286.4" y="652.1" textLength="18.0" lengthAdjust="spacingAndGlyphs">30</text>
<text x="191.9" y="551.6" textLength="18.0" lengthAdjust="spacingAndGlyphs">50</text>
<text x="191.9" y="672.2" textLength="18.0" lengthAdjust="spacingAndGlyphs">26</text>
<text x="276.1" y="511.4" textLength="18.0" lengthAdjust="spacingAndGlyphs">58</text>
<text x="360.3" y="491.3" textLength="18.0" lengthAdjust="spacingAndGlyphs">62</text>
<text x="444.5" y="481.3" textLength="18.0" lengthAdjust="spacingAndGlyphs">64</text>
<text x="528.7" y="476.2" textLength="18.0" lengthAdjust="spacingAndGlyphs">65</text>
<text x="612.9" y="481.3" textLength="18.0" lengthAdjust="spacingAndGlyphs">64</text>
<text x="697.0" y="486.3" textLength="18.0" lengthAdjust="spacingAndGlyphs">63</text>
<text x="697.0" y="461.2" textLength="18.0" lengthAdjust="spacingAndGlyphs">68</text>
<text x="781.2" y="481.3" textLength="18.0" lengthAdjust="spacingAndGlyphs">64</text>
<text x="781.2" y="461.2" textLength="18.0" lengthAdjust="spacingAndGlyphs">68</text>
<text x="865.4" y="486.3" textLength="18.0" lengthAdjust="spacingAndGlyphs">63</text>
<text x="865.4" y="456.1" textLength="18.0" lengthAdjust="spacingAndGlyphs">69</text>
<text x="949.6" y="491.3" textLength="18.0" lengthAdjust="spacingAndGlyphs">62</text>
<text x="949.6" y="456.1" textLength="18.0" lengthAdjust="spacingAndGlyphs">69</text>
<text x="1033.8" y="516.4" textLength="18.0" lengthAdjust="spacingAndGlyphs">57</text>
<text x="1033.8" y="446.1" textLength="18.0" lengthAdjust="spacingAndGlyphs">71</text>
<text x="1118.0" y="516.4" textLength="18.0" lengthAdjust="spacingAndGlyphs">57</text>
<text x="1118.0" y="476.2" textLength="18.0" lengthAdjust="spacingAndGlyphs">65</text>
<text x="1202.2" y="511.4" textLength="18.0" lengthAdjust="spacingAndGlyphs">58</text>
<text x="1202.2" y="486.3" textLength="18.0" lengthAdjust="spacingAndGlyphs">63</text>
<text x="1286.4" y="511.4" textLength="18.0" lengthAdjust="spacingAndGlyphs">58</text>
<text x="1286.4" y="476.2" textLength="18.0" lengthAdjust="spacingAndGlyphs">65</text>
<text x="191.9" y="802.8" textLength="9.0" lengthAdjust="spacingAndGlyphs">0</text>
<text x="276.1" y="802.8" textLength="9.0" lengthAdjust="spacingAndGlyphs">0</text>
<text x="360.3" y="802.8" textLength="9.0" lengthAdjust="spacingAndGlyphs">0</text>
<text x="444.5" y="802.8" textLength="9.0" lengthAdjust="spacingAndGlyphs">0</text>
<text x="528.7" y="802.8" textLength="9.0" lengthAdjust="spacingAndGlyphs">0</text>
<text x="612.9" y="802.8" textLength="9.0" lengthAdjust="spacingAndGlyphs">0</text>
<text x="697.0" y="797.8" textLength="9.0" lengthAdjust="spacingAndGlyphs">1</text>
<text x="781.2" y="797.8" textLength="9.0" lengthAdjust="spacingAndGlyphs">1</text>
<text x="865.4" y="792.8" textLength="9.0" lengthAdjust="spacingAndGlyphs">2</text>
<text x="949.6" y="797.8" textLength="9.0" lengthAdjust="spacingAndGlyphs">1</text>
<text x="1033.8" y="787.7" textLength="9.0" lengthAdjust="spacingAndGlyphs">3</text>
<text x="1118.0" y="787.7" textLength="9.0" lengthAdjust="spacingAndGlyphs">3</text>
<text x="1202.2" y="787.7" textLength="9.0" lengthAdjust="spacingAndGlyphs">3</text>
<text x="1286.4" y="787.7" textLength="9.0" lengthAdjust="spacingAndGlyphs">3</text>
</g>
<g><line x1="1357.2" x2="1378.6" y1="463.7" y2="463.7" stroke="#7cb5ec" stroke-width="2.67"/><circle cx="1367.9" cy="463.7" r="5.33" fill="#7cb5ec" stroke="#666" stroke-width="1.33"/><text x="1386.7" y="469.0" font-family="'DejaVu Sans Condensed', 'DejaVu Sans', 'Liberation Sans', sans-serif" font-weight="700" font-size="16" fill="#333" textLength="311.3" lengthAdjust="spacingAndGlyphs">Reticulated supply (i.e. piped to house)</text></g>
<g><line x1="1357.2" x2="1378.6" y1="484.4" y2="484.4" stroke="#434348" stroke-width="2.67"/><polygon points="1367.9,479.0 1373.2,484.4 1367.9,489.7 1362.6,484.4" fill="#434348" stroke="#666" stroke-width="1.33"/><text x="1386.7" y="489.7" font-family="'DejaVu Sans Condensed', 'DejaVu Sans', 'Liberation Sans', sans-serif" font-weight="700" font-size="16" fill="#333" textLength="76.7" lengthAdjust="spacingAndGlyphs">Tube Well</text></g>
<g><line x1="1357.2" x2="1378.6" y1="505.0" y2="505.0" stroke="#90ed7d" stroke-width="2.67"/><rect x="1362.6" y="499.7" width="10.66" height="10.66" fill="#90ed7d" stroke="#666" stroke-width="1.33"/><text x="1386.7" y="510.3" font-family="'DejaVu Sans Condensed', 'DejaVu Sans', 'Liberation Sans', sans-serif" font-weight="700" font-size="16" fill="#333" textLength="82.3" lengthAdjust="spacingAndGlyphs">Rain water</text></g>
<g><line x1="1357.2" x2="1378.6" y1="525.7" y2="525.7" stroke="#f7a35c" stroke-width="2.67"/><polygon points="1367.9,520.4 1373.2,531.0 1362.6,531.0" fill="#f7a35c" stroke="#666" stroke-width="1.33"/><text x="1386.7" y="531.0" font-family="'DejaVu Sans Condensed', 'DejaVu Sans', 'Liberation Sans', sans-serif" font-weight="700" font-size="16" fill="#333" textLength="156.4" lengthAdjust="spacingAndGlyphs">Desalinization Plant</text></g>
<g><line x1="1357.2" x2="1378.6" y1="546.4" y2="546.4" stroke="#8085e9" stroke-width="2.67"/><polygon points="1362.6,541.0 1373.2,541.0 1367.9,551.7" fill="#8085e9" stroke="#666" stroke-width="1.33"/><text x="1386.7" y="551.7" font-family="'DejaVu Sans Condensed', 'DejaVu Sans', 'Liberation Sans', sans-serif" font-weight="700" font-size="16" fill="#333" textLength="198.1" lengthAdjust="spacingAndGlyphs">Local Water Transporters</text></g>
<g><line x1="1357.2" x2="1378.6" y1="567.0" y2="567.0" stroke="#f15c80" stroke-width="2.67"/><circle cx="1367.9" cy="567.0" r="5.33" fill="#f15c80" stroke="#666" stroke-width="1.33"/><text x="1386.7" y="572.3" font-family="'DejaVu Sans Condensed', 'DejaVu Sans', 'Liberation Sans', sans-serif" font-weight="700" font-size="16" fill="#333" textLength="157.4" lengthAdjust="spacingAndGlyphs">BSF (bio-sand filter)</text></g>
<g><line x1="1357.2" x2="1378.6" y1="587.7" y2="587.7" stroke="#e4d354" stroke-width="2.67"/><polygon points="1367.9,582.4 1373.2,587.7 1367.9,593.1 1362.6,587.7" fill="#e4d354" stroke="#666" stroke-width="1.33"/><text x="1386.7" y="593.0" font-family="'DejaVu Sans Condensed', 'DejaVu Sans', 'Liberation Sans', sans-serif" font-weight="700" font-size="16" fill="#333" textLength="317.6" lengthAdjust="spacingAndGlyphs">Integrated Rainwater Harvesting System</text></g>
<g><line x1="1357.2" x2="1378.6" y1="608.4" y2="608.4" stroke="#2b908f" stroke-width="2.67"/><rect x="1362.6" y="603.1" width="10.66" height="10.66" fill="#2b908f" stroke="#666" stroke-width="1.33"/><text x="1386.7" y="613.7" font-family="'DejaVu Sans Condensed', 'DejaVu Sans', 'Liberation Sans', sans-serif" font-weight="700" font-size="16" fill="#333" textLength="89.2" lengthAdjust="spacingAndGlyphs">Pond Water</text></g>
<g><line x1="1357.2" x2="1378.6" y1="629.1" y2="629.1" stroke="#f45b5b" stroke-width="2.67"/><polygon points="1367.9,623.7 1373.2,634.4 1362.6,634.4" fill="#f45b5b" stroke="#666" stroke-width="1.33"/><text x="1386.7" y="634.4" font-family="'DejaVu Sans Condensed', 'DejaVu Sans', 'Liberation Sans', sans-serif" font-weight="700" font-size="16" fill="#333" textLength="102.3" lengthAdjust="spacingAndGlyphs">River/Stream</text></g>
<g><line x1="1357.2" x2="1378.6" y1="649.7" y2="649.7" stroke="#91e8e1" stroke-width="2.67"/><polygon points="1362.6,644.4 1373.2,644.4 1367.9,655.1" fill="#91e8e1" stroke="#666" stroke-width="1.33"/><text x="1386.7" y="655.0" font-family="'DejaVu Sans Condensed', 'DejaVu Sans', 'Liberation Sans', sans-serif" font-weight="700" font-size="16" fill="#333" textLength="25.7" lengthAdjust="spacingAndGlyphs">PSF</text></g>
<g><line x1="1357.2" x2="1378.6" y1="670.4" y2="670.4" stroke="#7cb5ec" stroke-width="2.67"/><circle cx="1367.9" cy="670.4" r="5.33" fill="#7cb5ec" stroke="#666" stroke-width="1.33"/><text x="1386.7" y="675.7" font-family="'DejaVu Sans Condensed', 'DejaVu Sans', 'Liberation Sans', sans-serif" font-weight="700" font-size="16" fill="#333" textLength="173" lengthAdjust="spacingAndGlyphs">Reverse Osmosis (RO)</text></g>
<g><line x1="1357.2" x2="1378.6" y1="691.1" y2="691.1" stroke="#434348" stroke-width="2.67"/><polygon points="1367.9,685.7 1373.2,691.1 1367.9,696.4 1362.6,691.1" fill="#434348" stroke="#666" stroke-width="1.33"/><text x="1386.7" y="696.4" font-family="'DejaVu Sans Condensed', 'DejaVu Sans', 'Liberation Sans', sans-serif" font-weight="700" font-size="16" fill="#333" textLength="143" lengthAdjust="spacingAndGlyphs">Other (Specify.....)</text></g>
<g><line x1="1357.2" x2="1378.6" y1="711.7" y2="711.7" stroke="#90ed7d" stroke-width="2.67"/><rect x="1362.6" y="706.4" width="10.66" height="10.66" fill="#90ed7d" stroke="#666" stroke-width="1.33"/><text x="1386.7" y="717.0" font-family="'DejaVu Sans Condensed', 'DejaVu Sans', 'Liberation Sans', sans-serif" font-weight="700" font-size="16" fill="#333" textLength="250.9" lengthAdjust="spacingAndGlyphs">Household have sanitary latrine</text></g>
<text x="1716" y="857" text-anchor="end" font-family="'DejaVu Sans', 'Liberation Sans', sans-serif" font-size="12" fill="#999">Highcharts.com</text>
</svg>
</main>
<footer class="footer">Local Government Initiatives on Climate change (LoGIC)</footer>
</body>
</html>
